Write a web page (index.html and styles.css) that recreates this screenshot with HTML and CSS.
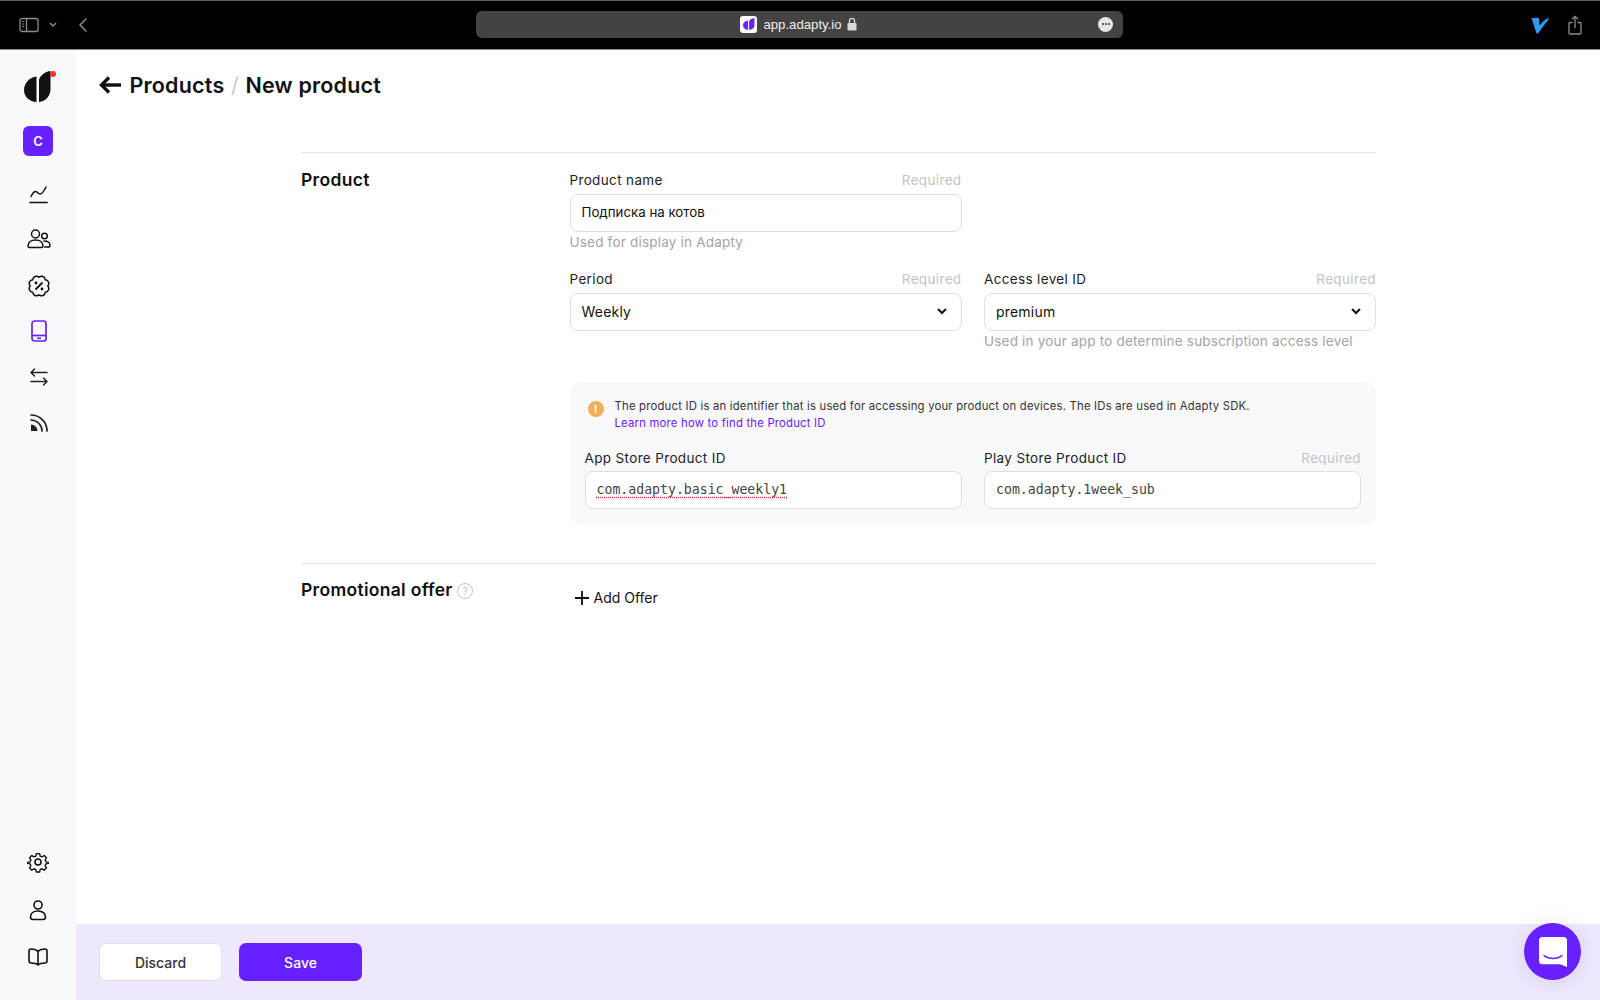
FILE: index.html
```html
<!DOCTYPE html>
<html lang="en">
<head>
  <meta charset="UTF-8" />
  <meta name="viewport" content="width=device-width, initial-scale=1.0" />
  <title>New product</title>
  <link rel="stylesheet" href="styles.css">
</head>
<body>
  <header class="browser-bar">
    <div class="browser-left">
      <svg class="bar-icon" width="20" height="16" viewBox="0 0 20 16" fill="none" stroke="#8b8b8b" stroke-width="1.3"><rect x="1" y="1.5" width="18" height="13" rx="2"/><path d="M7.5 1.5v13"/><path d="M3.2 4.5h2M3.2 7h2M3.2 9.5h2" stroke-width="1"/></svg>
      <svg class="bar-chevron" width="8" height="6" viewBox="0 0 8 6" fill="none" stroke="#8b8b8b" stroke-width="1.5"><path d="M1 1l3 3 3-3"/></svg>
      <svg class="bar-back" width="10" height="16" viewBox="0 0 10 16" fill="none" stroke="#8b8b8b" stroke-width="1.5"><path d="M8.5 1.5L2 8l6.5 6.5"/></svg>
    </div>
    <div class="address">
      <div class="address-center">
        <span class="favicon">
          <svg width="14" height="14" viewBox="0 0 13 13" fill="#6720ff"><path d="M5.600 3.200v8.600C2.800 11.800 1 9.900 1 7.600c0-2.200 2-4.200 4.600-4.400z"/><path d="M6.600 11.800V4.500C6.600 3 8.800 1.200 11.600 1v6.600c0 2.400-2.200 4.200-5 4.200z"/></svg>
        </span>
        <span class="address-text">app.adapty.io</span>
        <svg width="10" height="14" viewBox="0 0 10 14" fill="#d8d8d8"><path d="M2.500 7V3.800a2.500 2.500 0 015 0V7" fill="none" stroke="#d8d8d8" stroke-width="1.300"/><rect x="0.500" y="6" width="9" height="7.500" rx="1.200"/></svg>
      </div>
      <span class="address-more"><i></i><i></i><i></i></span>
    </div>
    <div class="browser-right">
      <svg width="19" height="18" viewBox="0 0 19 18" fill="#2b9bf4"><path d="M0.500 2H8L8.500 9.500 12 5.500C13.500 4 15.500 2.500 18.500 2 16 5.500 11 12 7 17.500H5.500z"/></svg>
      <svg width="14" height="20" viewBox="0 0 14 20" fill="none" stroke="#8b8b8b" stroke-width="1.300"><path d="M4.500 7.500H2a1 1 0 00-1 1V18a1 1 0 001 1h10a1 1 0 001-1V8.500a1 1 0 00-1-1H9.500"/><path d="M7 13V1.500M4 4.200L7 1.300l3 2.900"/></svg>
    </div>
  </header>

  <div class="app">
    <aside class="sidebar">
      <div class="logo">
        <svg width="28" height="32" viewBox="0 0 28 32" fill="#111"><path d="M12.500 6.500V32C5.500 31.500 0 27 0 20 0 13 5.500 7.500 12.500 6.500z"/><path d="M15 32V9.500C16.500 5.500 21 1.500 26.500 1v18c0 7-5 12.500-11.500 13z"/></svg>
        <span class="logo-dot"></span>
      </div>
      <div class="workspace">C</div>
      <nav class="nav-top">
        <a class="nav-item"><svg width="22" height="22" viewBox="0 -1.500 22 22" fill="none" stroke="#111" stroke-width="1.500" stroke-linecap="round" stroke-linejoin="round"><path d="M3 13c1.500-3 3-5 4.500-5 2 0 2.500 2.500 4.500 2.500 2.500 0 4-3 6-7"/><path d="M2 19h17" stroke-width="1.700"/></svg></a>
        <a class="nav-item"><svg width="24" height="22" viewBox="0 0 24 22" fill="none" stroke="#111" stroke-width="1.500" stroke-linejoin="round"><circle cx="8.500" cy="6" r="4"/><path d="M1 18c0-3.500 3-6 7.500-6s7.500 2.500 7.500 6c0 1-.7 1.500-1.500 1.500h-12C1.700 19.500 1 19 1 18z"/><circle cx="17.500" cy="8" r="2.800"/><path d="M16.500 13.200c3.500-.5 6.500 1 6.500 4 0 1.300-.8 1.800-1.800 1.800h-4"/></svg></a>
        <a class="nav-item"><svg width="24" height="24" viewBox="0 -1 24 24" fill="none" stroke="#111" stroke-width="1.500" stroke-linejoin="round"><path d="M12 3.200A3.700 3.700 0 0118.200 5.800A3.700 3.700 0 0120.800 12A3.700 3.700 0 0118.200 18.200A3.700 3.700 0 0112 20.800A3.700 3.700 0 015.800 18.200A3.700 3.700 0 013.200 12A3.700 3.700 0 015.800 5.800A3.700 3.700 0 0112 3.200z"/><path d="M8.500 15.500l7-7" stroke-width="1.800"/><circle cx="9" cy="9" r="1.400" fill="#111" stroke="none"/><circle cx="15" cy="15" r="1.400" fill="#111" stroke="none"/></svg></a>
        <a class="nav-item"><svg width="16" height="22" viewBox="0 0 16 22" fill="none" stroke="#6720ff" stroke-width="1.700"><rect x="1" y="1" width="14" height="20" rx="2.500"/><path d="M1 15.500h14"/><path d="M6 18.300h4" stroke-width="1.500"/></svg></a>
        <a class="nav-item"><svg width="20" height="20" viewBox="0 0 20 20" fill="none" stroke="#222" stroke-width="1.500" stroke-linecap="round" stroke-linejoin="round"><path d="M18 5.500H2M5.500 2L2 5.500 5.500 9"/><path d="M2 14.500h16M14.500 11l3.500 3.500-3.500 3.500"/></svg></a>
        <a class="nav-item"><svg width="20" height="20" viewBox="0 0 20 20" fill="none" stroke="#222" stroke-width="1.700" stroke-linecap="round"><path d="M2 2c8.800 0 16 7.200 16 16"/><path d="M2 7c6 0 11 5 11 11"/><path d="M2 11.500c3.600 0 6.500 2.900 6.500 6.500H2z" fill="#222" stroke="none"/></svg></a>
      </nav>
      <nav class="nav-bottom">
        <a class="nav-item"><svg width="22" height="22" viewBox="0 0 24 24" fill="none" stroke="#111" stroke-width="1.700" stroke-linejoin="round"><circle cx="12" cy="12" r="3.300"/><path d="M10 1.800h4l.6 3 2.300 1 2.600-1.700 2.800 2.800-1.700 2.600 1 2.300 3 .6v1.200l-3 .6-1 2.300 1.700 2.600-2.800 2.800-2.600-1.700-2.300 1-.6 3h-4l-.6-3-2.300-1-2.600 1.700-2.800-2.800 1.700-2.600-1-2.300-3-.6v-1.200l3-.6 1-2.300-1.700-2.600 2.800-2.800 2.600 1.700 2.300-1z" transform="translate(12 12) scale(.9) translate(-12 -12)"/></svg></a>
        <a class="nav-item"><svg width="18" height="22" viewBox="0 0 18 22" fill="none" stroke="#111" stroke-width="1.600" stroke-linejoin="round"><circle cx="9" cy="6" r="4"/><path d="M1.500 18c0-3.500 3-6 7.500-6s7.500 2.500 7.500 6c0 1.500-1 2.500-2.500 2.500H4C2.500 20.500 1.500 19.500 1.500 18z"/></svg></a>
        <a class="nav-item"><svg width="20" height="18" viewBox="0 0 20 18" fill="none" stroke="#111" stroke-width="1.600" stroke-linejoin="round"><path d="M10 3.500C8.500 1.800 6.500 1 3 1 1.800 1 1 1.800 1 3v10c0 1.200.8 2 2 2 3.500 0 5.500.5 7 2 1.500-1.500 3.500-2 7-2 1.200 0 2-.8 2-2V3c0-1.200-.8-2-2-2-3.500 0-5.500.8-7 2.500zM10 3.500V17"/></svg></a>
      </nav>
    </aside>

    <div class="main">
      <div class="content">
        <div class="breadcrumb">
          <svg class="back-arrow" width="22" height="18" viewBox="0 0 22 18" fill="none" stroke="#111" stroke-width="3.400"><path d="M22 9H3"/><path d="M10 1.500L2.500 9l7.500 7.500"/></svg>
          <span>Products</span>
          <span class="crumb-sep">/</span>
          <span>New product</span>
        </div>

        <section class="section section-product">
          <h3 class="section-title">Product</h3>
          <div class="section-body">
            <div class="form-row">
              <div class="field">
                <div class="field-label"><span>Product name</span><span class="required">Required</span></div>
                <div class="input input-ru">Подписка на котов</div>
                <div class="hint">Used for display in Adapty</div>
              </div>
              <div class="field"></div>
            </div>
            <div class="form-row">
              <div class="field">
                <div class="field-label"><span>Period</span><span class="required">Required</span></div>
                <div class="input select">Weekly
                  <svg width="10" height="7" viewBox="0 0 10 7" fill="none" stroke="#111" stroke-width="2"><path d="M1 1l4 4 4-4"/></svg>
                </div>
              </div>
              <div class="field">
                <div class="field-label"><span>Access level ID</span><span class="required">Required</span></div>
                <div class="input select">premium
                  <svg width="10" height="7" viewBox="0 0 10 7" fill="none" stroke="#111" stroke-width="2"><path d="M1 1l4 4 4-4"/></svg>
                </div>
                <div class="hint">Used in your app to determine subscription access level</div>
              </div>
            </div>
            <div class="id-panel">
              <div class="note">
                <span class="note-icon">!</span>
                <p>The product ID is an identifier that is used for accessing your product on devices. The IDs are used in Adapty SDK.<br><a>Learn more how to find the Product ID</a></p>
              </div>
              <div class="form-row">
                <div class="field">
                  <div class="field-label"><span>App Store Product ID</span></div>
                  <div class="input mono"><span class="misspelled">com.adapty.basic_weekly1</span></div>
                </div>
                <div class="field">
                  <div class="field-label"><span>Play Store Product ID</span><span class="required">Required</span></div>
                  <div class="input mono">com.adapty.1week_sub</div>
                </div>
              </div>
            </div>
          </div>
        </section>

        <section class="section section-offer">
          <h3 class="section-title">Promotional offer <span class="help">?</span></h3>
          <div class="section-body">
            <a class="add-offer">
              <svg width="14" height="14" viewBox="0 0 14 14" fill="none" stroke="#111" stroke-width="1.800"><path d="M7 0v14M0 7h14"/></svg>
              Add Offer
            </a>
          </div>
        </section>
      </div>

      <footer class="action-bar">
        <button class="btn btn-light">Discard</button>
        <button class="btn btn-primary">Save</button>
      </footer>
    </div>
  </div>

  <div class="chat-bubble">
    <svg width="28" height="30" viewBox="0 0 28 30"><path d="M3.500 0h21A3.500 3.500 0 0128 3.500V30l-7-2.800H3.500A3.500 3.500 0 010 23.700V3.500A3.500 3.500 0 013.500 0z" fill="#fff"/><path d="M5 18.500c2.500 2 5.500 3 9 3s6.500-1 9-3" fill="none" stroke="#6720ff" stroke-width="1.500" stroke-linecap="round"/></svg>
  </div>
</body>
</html>
```

FILE: styles.css
```css
* {
  box-sizing: border-box;
}
body {
  margin: 0;
  height: 1000px;
  overflow: hidden;
  font-family: Inter, "Noto Sans", sans-serif;
  color: #111;
  background: #fff;
}
.browser-bar {
  height: 50px;
  background: #000;
  border-top: 1px solid #5a5a5a;
  border-bottom: 1px solid #8a8a8a;
  display: grid;
  grid-template-columns: 476px 647px 1fr;
  align-items: center;
}
.browser-left {
  display: flex;
  align-items: center;
  padding-left: 19px;
}
.bar-chevron {
  margin-left: 10px;
}
.bar-back {
  margin-left: 21px;
}
.address {
  height: 27px;
  margin-bottom: 2px;
  background: #434343;
  border-radius: 6px;
  display: flex;
  align-items: center;
  justify-content: center;
  position: relative;
}
.address-center {
  display: flex;
  align-items: center;
  gap: 5px;
  margin-right: 2px;
}
.favicon {
  width: 17px;
  height: 17px;
  background: #fff;
  border-radius: 3px;
  display: flex;
  align-items: center;
  justify-content: center;
  margin-right: 1px;
}
.address-text {
  font-family: "Liberation Sans", sans-serif;
  font-size: 13.200px;
  color: #f0f0f0;
}
.address-more {
  position: absolute;
  right: 10px;
  top: 6px;
  width: 15px;
  height: 15px;
  border-radius: 50%;
  background: #e6e6e6;
  display: flex;
  align-items: center;
  justify-content: center;
  gap: 1px;
}
.address-more i {
  width: 2px;
  height: 2px;
  background: #333;
  border-radius: 50%;
}
.browser-right {
  display: flex;
  align-items: center;
  justify-content: flex-end;
  gap: 18px;
  padding-right: 18px;
}
.app {
  display: flex;
  height: 950px;
}
.sidebar {
  width: 76px;
  flex: none;
  background: #f9f9fc;
  display: flex;
  flex-direction: column;
  align-items: center;
  padding-top: 20px;
}
.logo {
  position: relative;
  height: 34px;
}
.logo-dot {
  position: absolute;
  top: 1px;
  right: -4px;
  width: 6px;
  height: 6px;
  border-radius: 50%;
  background: #ee3333;
}
.workspace {
  width: 30px;
  height: 30px;
  margin-top: 22px;
  border-radius: 6px;
  background: #6720ff;
  color: #fff;
  font-size: 13px;
  font-weight: 600;
  display: flex;
  align-items: center;
  justify-content: center;
}
.nav-top {
  margin: 14px 0 0 2px;
  display: flex;
  flex-direction: column;
}
.nav-item {
  height: 46px;
  display: flex;
  align-items: center;
  justify-content: center;
}
.nav-bottom {
  margin-top: auto;
  margin-bottom: 20px;
  display: flex;
  flex-direction: column;
  gap: 1.500px;
}
.main {
  flex: 1;
  display: flex;
  flex-direction: column;
  min-width: 0;
}
.content {
  flex: 1;
  padding: 0 224px 0 225px;
}
.breadcrumb {
  margin: 19px 0 0 -202px;
  height: 32px;
  display: flex;
  align-items: center;
  gap: 6.500px;
  font-size: 21.500px;
  font-weight: 600;
  letter-spacing: 0.2px;
}
.back-arrow {
  margin-right: 2px;
}
.crumb-sep {
  color: #c8c8c8;
  font-weight: 400;
}
.section {
  display: flex;
  border-top: 1px solid #e8e8ea;
}
.section-product {
  margin-top: 51px;
  padding-top: 17px;
  height: 411px;
}
.section-offer {
  padding-top: 16px;
}
.section-title {
  width: 268.500px;
  flex: none;
  margin: 0;
  font-size: 17.500px;
  font-weight: 600;
  line-height: 20px;
  letter-spacing: 0.3px;
}
.help {
  display: inline-flex;
  align-items: center;
  justify-content: center;
  width: 16px;
  height: 16px;
  margin-left: 0;
  border: 1.300px solid #c4c4c4;
  border-radius: 50%;
  color: #c4c4c4;
  font-size: 10px;
  font-weight: 400;
  letter-spacing: 0;
  vertical-align: 1px;
}
.section-body {
  flex: 1;
  min-width: 0;
}
.form-row {
  display: grid;
  grid-template-columns: 1fr 1fr;
  gap: 22.500px;
}
.form-row + .form-row {
  margin-top: 17px;
}
.field-label {
  display: flex;
  justify-content: space-between;
  font-size: 13.500px;
  line-height: 20px;
  height: 24px;
  color: #222;
  letter-spacing: 0.35px;
}
.id-panel .field-label {
  height: 23px;
}
.required {
  color: #c4c4c4;
}
.input {
  height: 38px;
  padding: 0 14px 2px 11px;
  border: 1px solid #dfdfe3;
  border-radius: 8px;
  background: #fff;
  display: flex;
  align-items: center;
  justify-content: space-between;
  font-size: 14px;
  color: #111;
  letter-spacing: 0.2px;
}
.input-ru {
  font-size: 13.300px;
  letter-spacing: 0;
}
.mono {
  font-family: "DejaVu Sans Mono", "Liberation Mono", monospace;
  font-size: 13.200px;
  letter-spacing: 0;
  color: #444;
}
.misspelled {
  text-decoration: underline dotted #e03535;
  text-underline-offset: 3px;
}
.hint {
  font-size: 13.500px;
  line-height: 20px;
  color: #a3a3a8;
  letter-spacing: 0.2px;
}
.id-panel {
  margin-top: 31px;
  padding: 16px 15px 15px;
  height: 143px;
  background: #f9f9fc;
  border-radius: 10px;
}
.note {
  display: flex;
  gap: 11px;
  height: 50px;
}
.note-icon {
  flex: none;
  width: 16px;
  height: 16px;
  margin: 3px 0 0 3px;
  border-radius: 50%;
  background: #eeb057;
  color: #fff;
  font-size: 11px;
  font-weight: 700;
  display: flex;
  align-items: center;
  justify-content: center;
}
.note p {
  margin: 0;
  font-size: 11.300px;
  line-height: 17px;
  color: #333;
  letter-spacing: 0.21px;
}
.note a {
  color: #6720ff;
}
.add-offer {
  display: inline-flex;
  align-items: center;
  gap: 5px;
  margin: 9px 0 0 5px;
  font-size: 14px;
  color: #111;
}
.action-bar {
  height: 76px;
  flex: none;
  background: #efe8fd;
  display: flex;
  align-items: center;
  gap: 17px;
  padding-left: 23px;
}
.btn {
  width: 123px;
  height: 38px;
  border-radius: 7px;
  font-family: inherit;
  font-size: 14px;
  font-weight: 500;
}
.btn-light {
  background: #fff;
  border: 1px solid #e2dfe9;
  color: #333;
}
.btn-primary {
  background: #6720ff;
  border: 0;
  color: #fff;
}
.chat-bubble {
  position: fixed;
  left: 1524px;
  top: 923px;
  width: 57px;
  height: 57px;
  border-radius: 50%;
  background: #6720ff;
  box-shadow: 0 2px 22px rgba(60, 30, 140, 0.12);
  display: flex;
  align-items: center;
  justify-content: center;
}
```
